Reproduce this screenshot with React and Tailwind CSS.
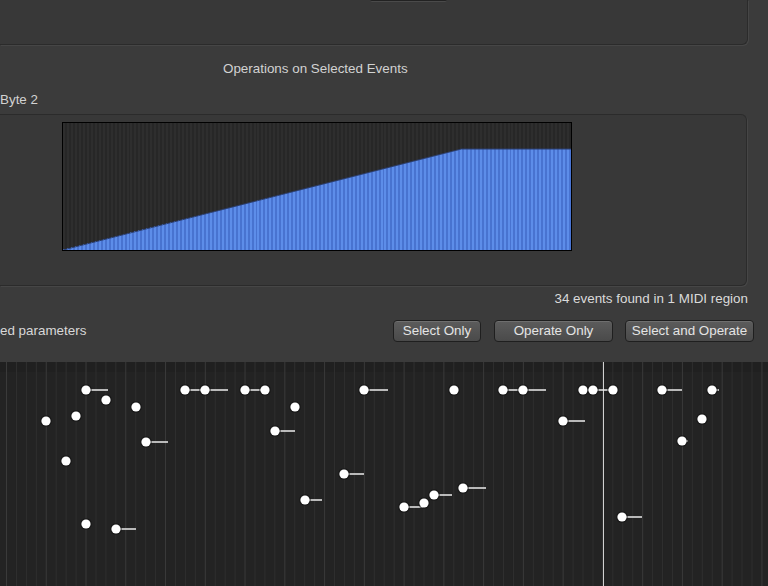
import React from "react";

const DOTS = [
  [86, 390, 108], [106, 400], [136, 407], [46, 421], [76, 416], [146, 442, 168],
  [66, 461], [86, 524], [116, 529, 136], [185, 390, 205], [205, 390, 228],
  [245, 390, 265], [265, 390, 268], [295, 407], [275, 431, 295], [364, 390, 388],
  [454, 390], [344, 474, 364], [305, 500, 322], [404, 507, 423], [424, 503, 427],
  [434, 495, 452], [463, 488, 486], [503, 390, 523], [523, 390, 546], [583, 390, 593],
  [593, 390, 613], [613, 390, 617], [662, 390, 682], [712, 390, 719],
  [563, 421, 585], [702, 419], [682, 441, 688], [622, 517, 642],
];

function Graph() {
  const W = 508;
  const H = 127;
  const n = 128;
  const bw = W / n;
  const bars = [];
  for (let i = 0; i < n; i++) {
    const h = Math.round(Math.min(i + 0.6, 101));
    const x0 = Math.round(i * bw);
    const x1 = Math.round((i + 1) * bw);
    const xm = x0 + 2;
    bars.push(
      <g key={i}>
        <rect x={x0} y={0} width={xm - x0} height={H} fill="#2e2e2e" />
        <rect x={xm} y={0} width={x1 - xm} height={H} fill="#272727" />
        <rect x={x0} y={H - h} width={xm - x0} height={h} fill="#5d8de9" />
        <rect x={xm} y={H - h} width={x1 - xm} height={h} fill="#4873d0" />
      </g>
    );
  }
  return (
    <div className="w-[510px] h-[129px] border border-black bg-[#2a2a2a]">
      <svg width={W} height={H} viewBox={`0 0 ${W} ${H}`} className="block" shapeRendering="crispEdges">
        {bars}
        <polyline
          points={`0,${H} ${100.4 * bw},${H - 101} ${W},${H - 101}`}
          fill="none"
          stroke="#2c3f6e"
          strokeWidth="1"
          shapeRendering="geometricPrecision"
        />
      </svg>
    </div>
  );
}

function Btn({ children, w }) {
  return (
    <button
      className={`${w} h-[22px] rounded-[4px] border border-[#1f1f1f] bg-gradient-to-b from-[#5c5c5c] to-[#4a4a4a] text-[13.4px] leading-none text-[#e4e4e4] shadow-[inset_0_1px_0_rgba(255,255,255,0.12)]`}
    >
      {children}
    </button>
  );
}

function Grid() {
  const lines = [];
  for (let k = 0; k < 78; k++) {
    const x = 6.5 + 9.94 * k;
    if (x > 768) break;
    const bright = k % 4 === 0;
    lines.push(
      <line
        key={k}
        x1={x}
        x2={x}
        y1={0}
        y2={224}
        stroke={bright ? "#3a3a3a" : "#2f2f2f"}
        strokeWidth="1"
      />
    );
  }
  const oy = 362;
  return (
    <svg width="768" height="224" viewBox="0 0 768 224" className="block">
      <rect x="0" y="0" width="768" height="224" fill="#232323" />
      <rect x="0" y="0" width="768" height="10" fill="#202020" />
      {lines}
      <line x1="603.5" x2="603.5" y1="0" y2="224" stroke="#d0d0d0" strokeWidth="1" />
      {DOTS.map(([x, y, t], i) => (
        <g key={i}>
          {t ? (
            <line x1={x} x2={t} y1={y - oy} y2={y - oy} stroke="#ececec" strokeWidth="1.5" />
          ) : null}
          <circle cx={x} cy={y - oy} r="6" fill="#111" opacity="0.5" />
          <circle cx={x} cy={y - oy} r="4.6" fill="#ffffff" />
        </g>
      ))}
    </svg>
  );
}

export default function App() {
  return (
    <div
      className="w-[768px] h-[586px] overflow-hidden flex flex-col bg-[#3b3b3b] text-[13.4px]"
      style={{ fontFamily: '"Liberation Sans", Arial, sans-serif' }}
    >
      <div className="h-[362px] flex flex-col bg-[#3b3b3b]">
        <div className="w-[748px] h-[45px] shrink-0 bg-[#383838] border-r border-b border-[#2b2b2b] rounded-br-[6px] shadow-[1px_1px_0_rgba(255,255,255,0.06)] flex">
          <div className="ml-[370px] w-[77px] h-[2px] rounded-b-[3px] bg-[#222222] border-b border-[#4a4a4a]" />
        </div>
        <div className="mt-[16px] pl-[223px] h-[16px] leading-[16px] text-[#d2d2d2]">
          Operations on Selected Events
        </div>
        <div className="mt-[15px] h-[16px] leading-[16px] text-[#d2d2d2]">Byte 2</div>
        <div className="mt-[6px] w-[747px] h-[172px] shrink-0 bg-[#383838] border-t border-r border-b border-[#2b2b2b] rounded-r-[6px] shadow-[1px_1px_0_rgba(255,255,255,0.06)] pt-[7px] pl-[62px]">
          <Graph />
        </div>
        <div className="mt-[5px] w-[748px] h-[16px] leading-[16px] text-right text-[#dadada]">
          34 events found in 1 MIDI region
        </div>
        <div className="mt-[13px] flex items-center h-[22px]">
          <div className="text-[#d8d8d8] w-[393px]">ed parameters</div>
          <Btn w="w-[88px]">Select Only</Btn>
          <div className="w-[13px]" />
          <Btn w="w-[119px]">Operate Only</Btn>
          <div className="w-[12px]" />
          <Btn w="w-[129px]">Select and Operate</Btn>
        </div>
      </div>
      <div className="flex-1">
        <Grid />
      </div>
    </div>
  );
}
